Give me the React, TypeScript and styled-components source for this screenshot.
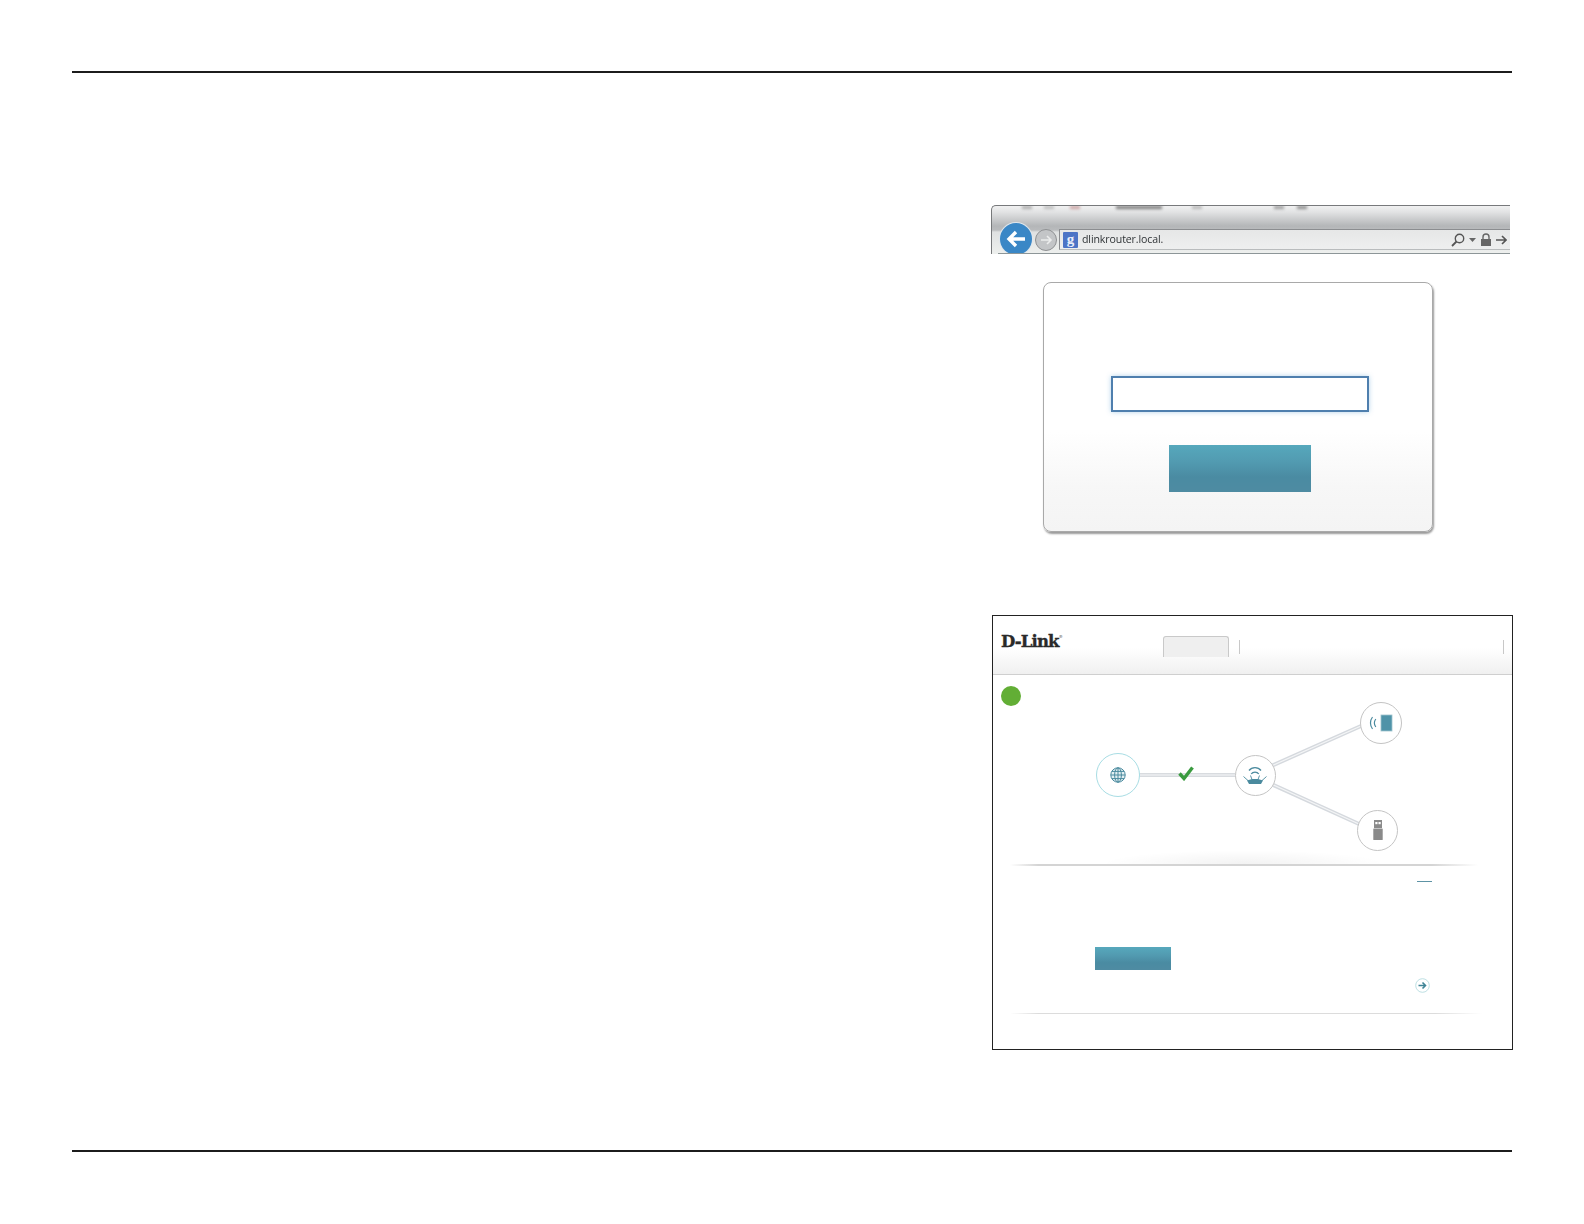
import * as React from 'react';
import styled, { createGlobalStyle } from 'styled-components';

const GlobalStyle = createGlobalStyle`
    html, body {
        margin: 0;
        padding: 0;
        background: #fff;
        font-family: "Liberation Sans", Arial, sans-serif;
    }
`;

const Page = styled.div`
    box-sizing: border-box;
    width: 1584px;
    height: 1224px;
    padding: 71px 72px 0;
    display: flex;
    flex-direction: column;
`;

const Rule = styled.div`
    height: 2px;
    background: #1c1c1c;
    flex: none;
`;

const Main = styled.div`
    box-sizing: border-box;
    flex: none;
    height: 1077px;
    display: flex;
    flex-direction: column;
    padding: 132px 0 0 920px;
`;

const BrowserBar = styled.div`
    position: relative;
    box-sizing: border-box;
    flex: none;
    width: 519px;
    height: 49px;
    margin-left: -1px;
    padding-left: 8px;
    display: flex;
    align-items: flex-start;
    overflow: hidden;
    border-top: 1px solid #77797b;
    border-left: 1px solid #77797b;
    border-top-left-radius: 5px;
    background: linear-gradient(#f1f1f1 0, #e2e3e4 6px, #b4b6b8 20px, #b9bbbd 24px, #dfe1e1 26px, #eef0ee 48px);

    &::after {
        content: '';
        position: absolute;
        left: 6px;
        right: 0;
        bottom: 0;
        height: 1px;
        background: #8d9698;
    }
`;

const Blotch = styled.span<{ $left: number; $width: number; $color: string }>`
    position: absolute;
    top: 0;
    left: ${(p) => p.$left}px;
    width: ${(p) => p.$width}px;
    height: 3px;
    background: ${(p) => p.$color};
    filter: blur(1.5px);
`;

const BackButton = styled.div`
    position: relative;
    flex: none;
    width: 32px;
    height: 32px;
    margin-top: 17px;
    border-radius: 50%;
    background: #3a87c6;
    display: flex;
    align-items: center;
    justify-content: center;
    box-shadow: 0 0 0 1px #dfe6ec;
`;

const ForwardButton = styled.div`
    flex: none;
    width: 22px;
    height: 22px;
    margin: 23px 2px 0 3px;
    box-sizing: border-box;
    border-radius: 50%;
    border: 1px solid #8f9193;
    background: #c3c5c7;
    display: flex;
    align-items: center;
    justify-content: center;
`;

const AddressBar = styled.div`
    flex: 1;
    height: 21px;
    margin-top: 23px;
    box-sizing: border-box;
    padding: 0 3px 0 3px;
    border-top: 1px solid #8b8d90;
    border-left: 1px solid #8b8d90;
    border-bottom: 1px solid #b9bcbd;
    background: linear-gradient(#e6e7e7, #eeefef);
    display: flex;
    align-items: center;
`;

const Favicon = styled.div`
    flex: none;
    width: 15px;
    height: 16px;
    background: #4c74c6;
    color: #e8eefa;
    font: 700 15px/14px "Liberation Serif", serif;
    text-align: center;
    border-radius: 1px;
`;

const Url = styled.div`
    flex: 1;
    margin-left: 4px;
    font: 400 10.6px/19px "Open Sans", sans-serif;
    letter-spacing: -0.12px;
    color: #2f3336;
    filter: blur(0.3px);
`;

const AddressIcons = styled.div`
    display: flex;
    align-items: center;
    gap: 4px;
    flex: none;
`;

const Card = styled.div`
    box-sizing: border-box;
    flex: none;
    width: 390px;
    height: 250px;
    margin: 28px 0 0 51px;
    padding: 93px 0 0 3px;
    display: flex;
    flex-direction: column;
    align-items: center;
    border: 1px solid #a9a9a9;
    border-radius: 8px;
    background: linear-gradient(#fff 0, #fff 60%, #f7f7f7 82%, #f4f4f4 100%);
    box-shadow: 1px 2px 2px rgba(0, 0, 0, 0.4);
`;

const PasswordBox = styled.div`
    box-sizing: border-box;
    width: 258px;
    height: 36px;
    flex: none;
    border: 2px solid #4f7fae;
    background: #fff;
    box-shadow: 0 0 5px rgba(90, 160, 210, 0.45);
`;

const TealButton = styled.div<{ $width: number; $height: number }>`
    flex: none;
    width: ${(p) => p.$width}px;
    height: ${(p) => p.$height}px;
    background: linear-gradient(#56a8bc 0, #529bb1 35%, #4a8ba2 68%, #4e8ba2 100%);
`;

const LoginButton = styled(TealButton)`
    margin-top: 33px;
`;

const Frame = styled.div`
    box-sizing: border-box;
    flex: none;
    width: 521px;
    height: 435px;
    margin-top: 83px;
    border: 1px solid #222;
    display: flex;
    flex-direction: column;
    background: #fff;
`;

const Header = styled.div`
    flex: none;
    box-sizing: border-box;
    height: 59px;
    padding: 20px 8px 0 8px;
    display: flex;
    align-items: flex-start;
    border-bottom: 1px solid #cfcfcf;
    background: linear-gradient(#fff 0, #fff 55%, #f0f0f0 100%);
`;

const Logo = styled.div`
    width: 162px;
    flex: none;
    margin-top: -1px;
    font: 700 16.5px/14px "DejaVu Serif", serif;
    letter-spacing: -0.85px;
    color: #2a2a2a;
    -webkit-text-stroke: 0.35px #2a2a2a;
    sup {
        font-size: 4px;
        line-height: 0;
        font-weight: 400;
        -webkit-text-stroke: 0;
        letter-spacing: 0;
        vertical-align: 9px;
    }
`;

const Tab = styled.div`
    flex: none;
    box-sizing: border-box;
    width: 66px;
    height: 21px;
    border: 1px solid #c9c9c9;
    border-bottom: none;
    border-radius: 3px 3px 0 0;
    background: #efefef;
`;

const NavSeparator = styled.div<{ $gap: number }>`
    flex: none;
    width: 1px;
    height: 14px;
    margin: 4px 0 0 ${(p) => p.$gap}px;
    background: #c8c8c8;
`;

const Canvas = styled.div`
    position: relative;
    flex: none;
    height: 189px;
`;

const StatusDot = styled.div`
    width: 20px;
    height: 20px;
    margin: 11px 0 0 8px;
    border-radius: 50%;
    background: #62ae35;
`;

const Links = styled.svg`
    position: absolute;
    left: 0;
    top: 0;
`;

const Node = styled.div<{ $x: number; $y: number; $size: number; $ring: string }>`
    position: absolute;
    box-sizing: border-box;
    left: ${(p) => p.$x - p.$size / 2}px;
    top: ${(p) => p.$y - p.$size / 2}px;
    width: ${(p) => p.$size}px;
    height: ${(p) => p.$size}px;
    border-radius: 50%;
    border: 1.5px solid ${(p) => p.$ring};
    background: #fff;
    display: flex;
    align-items: center;
    justify-content: center;
`;

const CheckMark = styled.svg`
    position: absolute;
    left: 185px;
    top: 91px;
`;

const Divider = styled.div<{ $start: number; $end: number; $color: string }>`
    flex: none;
    height: 1px;
    margin: 0 ${(p) => p.$end}px 0 ${(p) => p.$start}px;
    background: linear-gradient(90deg, transparent, ${(p) => p.$color} 6%, ${(p) => p.$color} 90%, transparent);
`;

const GlowDivider = styled(Divider)`
    position: relative;
    height: 2px;

    &::before {
        content: '';
        position: absolute;
        left: 90px;
        right: 90px;
        bottom: 2px;
        height: 14px;
        background: radial-gradient(ellipse at 50% 100%, rgba(0, 0, 0, 0.05), transparent 70%);
    }
`;

const Panel = styled.div`
    flex: none;
    height: 147px;
    display: flex;
    flex-direction: column;
    align-items: flex-start;
`;

const ShortLine = styled.div`
    width: 15px;
    height: 1px;
    margin: 15px 0 0 424px;
    background: #5d93a5;
`;

const ApplyButton = styled(TealButton)`
    margin: 65px 0 0 102px;
`;

const ArrowBadge = styled.svg`
    margin: 8px 0 0 422px;
    display: block;
`;

const Globe = () => (
    <svg width="16" height="16" viewBox="0 0 16 16" fill="none" stroke="#4a8a9e" strokeWidth="1">
        <circle cx="8" cy="8" r="7.2" fill="#e2eff2" />
        <ellipse cx="8" cy="8" rx="3.4" ry="7.2" />
        <path d="M8 .8v14.4M.8 8h14.4M1.8 4.4h12.4M1.8 11.6h12.4" />
    </svg>
);

const RouterIcon = () => (
    <svg width="24" height="20" viewBox="0 0 24 20" fill="none" stroke="#4a8a9e">
        <path d="M6 5.5C9 1.6 15 1.6 18 5.5" strokeWidth="1.3" />
        <path d="M8.2 9C10 6.4 14 6.4 15.8 9" strokeWidth="1.3" />
        <path d="M.5 11.5l5 4.5M23.5 11.5l-5 4.5M7.5 10.5l1.5 4M16.5 10.5l-1.5 4" strokeWidth="0.9" />
        <path d="M4 15.5l5-1.5h6l5 1.5-2 3.5H6z" fill="#4a8a9e" stroke="none" />
    </svg>
);

const TabletIcon = () => (
    <svg width="24" height="18" viewBox="0 0 24 18" fill="none">
        <path d="M3.5 3C.8 6.5.8 11.5 3.5 15" stroke="#4a8a9e" strokeWidth="1.2" />
        <path d="M6.8 5C5 7.5 5 10.5 6.8 13" stroke="#4a8a9e" strokeWidth="1.2" />
        <rect x="12" y="1" width="11" height="16" fill="#4f93a8" stroke="#9fc2cc" strokeWidth="0.8" />
    </svg>
);

const UsbIcon = () => (
    <svg width="10" height="20" viewBox="0 0 10 20">
        <rect x="1" y="0" width="8" height="8" fill="#8a8a8a" />
        <rect x="2.3" y="2" width="2.2" height="2.2" fill="#fff" />
        <rect x="5.5" y="2" width="2.2" height="2.2" fill="#fff" />
        <rect x="0.3" y="8.5" width="9.4" height="11.5" rx="0.6" fill="#8a8a8a" />
    </svg>
);

const App: React.FC = () => (
    <>
        <GlobalStyle />
        <Page>
            <Rule />
            <Main>
                <BrowserBar>
                    <Blotch $left={30} $width={10} $color="#a9a9a9" />
                    <Blotch $left={52} $width={10} $color="#bbb" />
                    <Blotch $left={78} $width={10} $color="#c9a0a0" />
                    <Blotch $left={124} $width={46} $color="#777" />
                    <Blotch $left={200} $width={10} $color="#b5b5b5" />
                    <Blotch $left={282} $width={10} $color="#999" />
                    <Blotch $left={305} $width={10} $color="#888" />
                    <BackButton>
                        <svg width="20" height="18" viewBox="0 0 20 18" fill="none" stroke="#fff" strokeWidth="3.4">
                            <path d="M19 9H3M10 2L3 9l7 7" />
                        </svg>
                    </BackButton>
                    <ForwardButton>
                        <svg width="13" height="12" viewBox="0 0 13 12" fill="none" stroke="#eceded" strokeWidth="1.6">
                            <path d="M1 6h10M7 2l4 4-4 4" />
                        </svg>
                    </ForwardButton>
                    <AddressBar>
                        <Favicon>g</Favicon>
                        <Url>dlinkrouter.local.</Url>
                        <AddressIcons>
                            <svg width="14" height="14" viewBox="0 0 14 14" fill="none" stroke="#555" strokeWidth="1.4">
                                <circle cx="8.5" cy="5.5" r="4.2" />
                                <path d="M5.5 8.5L1 13" strokeWidth="1.8" />
                            </svg>
                            <svg width="7" height="4" viewBox="0 0 7 4">
                                <path d="M0 0h7L3.5 4z" fill="#666" />
                            </svg>
                            <svg width="12" height="13" viewBox="0 0 12 13" fill="none">
                                <path d="M3 6V4a3 3 0 016 0v2" stroke="#666" strokeWidth="1.4" />
                                <rect x="1" y="6" width="10" height="7" fill="#666" />
                            </svg>
                            <svg width="11" height="10" viewBox="0 0 11 10" fill="none" stroke="#555" strokeWidth="1.6">
                                <path d="M0 5h9.5M6 1l4 4-4 4" />
                            </svg>
                        </AddressIcons>
                    </AddressBar>
                </BrowserBar>

                <Card>
                    <PasswordBox />
                    <LoginButton $width={142} $height={47} />
                </Card>

                <Frame>
                    <Header>
                        <Logo>
                            D-Link<sup>®</sup>
                        </Logo>
                        <Tab />
                        <NavSeparator $gap={10} />
                        <NavSeparator $gap={263} />
                    </Header>
                    <Canvas>
                        <StatusDot />
                        <Links width="519" height="189" viewBox="0 0 519 189" fill="none">
                            <path d="M146 100H242" stroke="#d8dbdf" strokeWidth="4" />
                            <path d="M146 100H242" stroke="#eceef0" strokeWidth="1.4" />
                            <path d="M276 92L368 51" stroke="#d5d9de" strokeWidth="4" />
                            <path d="M276 92L368 51" stroke="#f4f5f6" strokeWidth="1.2" />
                            <path d="M276 108L366 149" stroke="#d5d9de" strokeWidth="4" />
                            <path d="M276 108L366 149" stroke="#f4f5f6" strokeWidth="1.2" />
                        </Links>
                        <Node $x={124.5} $y={100} $size={44} $ring="#a8dde4">
                            <Globe />
                        </Node>
                        <Node $x={262} $y={100} $size={41} $ring="#c4c4c4">
                            <RouterIcon />
                        </Node>
                        <Node $x={387.5} $y={48} $size={42} $ring="#c4c4c4">
                            <TabletIcon />
                        </Node>
                        <Node $x={384.5} $y={155} $size={41} $ring="#c4c4c4">
                            <UsbIcon />
                        </Node>
                        <CheckMark width="16" height="15" viewBox="0 0 16 15" fill="none" stroke="#3a9b3f" strokeWidth="3.4">
                            <path d="M1.5 7.5L6 12.5 14.5 1.5" />
                        </CheckMark>
                    </Canvas>
                    <GlowDivider $start={17} $end={34} $color="#d4d4d4" />
                    <Panel>
                        <ShortLine />
                        <ApplyButton $width={76} $height={23} />
                        <ArrowBadge width="15" height="15" viewBox="0 0 15 15" fill="none">
                            <circle cx="7.5" cy="7.5" r="6.8" stroke="#b5dbe0" strokeWidth="0.9" />
                            <path d="M3.5 7.5h7M7.5 4.5l3 3-3 3" stroke="#3f8496" strokeWidth="1.6" />
                        </ArrowBadge>
                    </Panel>
                    <Divider $start={17} $end={30} $color="#dcdcdc" />
                </Frame>
            </Main>
            <Rule />
        </Page>
    </>
);

export default App;
